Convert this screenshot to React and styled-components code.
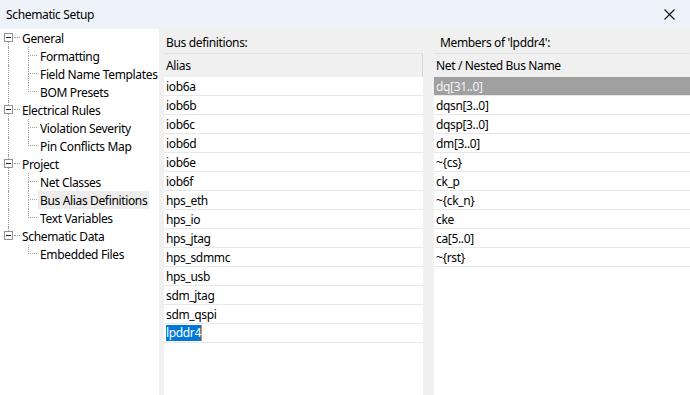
import React from 'react';
import styled, { createGlobalStyle } from 'styled-components';

const GlobalStyle = createGlobalStyle`
  html, body {
    margin: 0;
    padding: 0;
    background: #ffffff;
  }
  body {
    font-family: "Noto Sans", "Liberation Sans", sans-serif;
    font-size: 12px;
    letter-spacing: -0.35px;
    color: #000;
  }
`;

const Window = styled.div`
  width: 690px;
  height: 395px;
  display: flex;
  flex-direction: column;
  overflow: hidden;
`;

const TitleBar = styled.div`
  height: 29px;
  flex: none;
  display: flex;
  align-items: center;
  justify-content: space-between;
  padding: 0 6px 0 6px;
  background: #eef3f9;
`;

const Title = styled.span`
  font-size: 12px;
  color: #000;
`;

const CloseButton = styled.div`
  width: 30px;
  height: 29px;
  display: flex;
  align-items: center;
  justify-content: center;
`;

const Body = styled.div`
  flex: 1;
  display: flex;
  min-height: 0;
`;

/* ---------- tree ---------- */

const TreePanel = styled.div`
  width: 159px;
  flex: none;
  background: #fff;
  display: flex;
  flex-direction: column;
`;

const TreeRow = styled.div`
  height: 18px;
  display: flex;
  align-items: stretch;
`;

const Gutter = styled.div`
  width: 20px;
  flex: none;
  display: flex;
  flex-direction: column;
`;

const LineSeg = styled.div`
  height: ${p => p.$h}px;
  margin-left: 8px;
  border-left: 1px dotted ${p => (p.$on ? '#a0a0a0' : 'transparent')};
`;

const BoxRow = styled.div`
  height: 9px;
  display: flex;
  align-items: center;
  padding-left: 4px;
`;

const Expander = styled.div`
  width: 7px;
  height: 7px;
  border: 1px solid #919191;
  background: #fff;
  display: flex;
  align-items: center;
  justify-content: center;
  flex: none;
`;

const Minus = styled.span`
  width: 5px;
  height: 1px;
  background: #222;
`;

const Dash = styled.span`
  width: 6px;
  margin-left: 1px;
  border-top: 1px dotted #a0a0a0;
`;

const Elbow = styled.div`
  width: 20px;
  flex: none;
  display: flex;
  flex-direction: column;
`;

const ElbowTop = styled.div`
  height: 8px;
  width: 8px;
  margin-left: 8px;
  border-left: 1px dotted #a0a0a0;
  border-bottom: 1px dotted #a0a0a0;
`;

const ElbowBottom = styled.div`
  height: 9px;
  margin-left: 8px;
  border-left: 1px dotted ${p => (p.$last ? 'transparent' : '#a0a0a0')};
`;

const TreeLabel = styled.span`
  display: flex;
  align-items: center;
  padding: 0 2px;
  margin-left: ${p => (p.$child ? '-2px' : '0')};
  white-space: nowrap;
  background: ${p => (p.$selected ? '#ececec' : 'transparent')};
`;

/* ---------- main panel ---------- */

const MainPanel = styled.div`
  flex: 1;
  display: flex;
  background: #f0f0f0;
  padding-left: 5px;
  gap: 11px;
  min-width: 0;
`;

const Section = styled.div`
  width: ${p => p.$w}px;
  flex: none;
  display: flex;
  flex-direction: column;
`;

const SectionLabel = styled.div`
  height: 24px;
  display: flex;
  align-items: center;
  padding-left: ${p => p.$pad}px;
  padding-top: 2px;
  box-sizing: border-box;
`;

const Grid = styled.div`
  flex: 1;
  display: flex;
  flex-direction: column;
  background: #fff;
`;

const GridHeader = styled.div`
  height: 23px;
  display: flex;
  align-items: center;
  padding-left: 2px;
  background: #f0f0f0;
  border-top: 1px solid #e3e3e3;
  border-right: 1px solid ${p => (p.$sep ? '#d5d5d5' : 'transparent')};
`;

const GridRow = styled.div`
  height: 18px;
  display: flex;
  align-items: center;
  padding-left: 2px;
  border-bottom: 1px solid #e8e8e8;
  background: ${p => (p.$selected ? '#a0a0a0' : '#fff')};
  color: ${p => (p.$selected ? '#f4f4f4' : '#000')};
  white-space: nowrap;
`;

const EditText = styled.span`
  background: #0078d7;
  color: #fff;
  border-right: 1px solid #f08a24;
  line-height: 16px;
`;

const treeData = [
  { label: 'General', children: ['Formatting', 'Field Name Templates', 'BOM Presets'] },
  { label: 'Electrical Rules', children: ['Violation Severity', 'Pin Conflicts Map'] },
  { label: 'Project', children: ['Net Classes', 'Bus Alias Definitions', 'Text Variables'] },
  { label: 'Schematic Data', children: ['Embedded Files'] },
];

const aliases = [
  'iob6a', 'iob6b', 'iob6c', 'iob6d', 'iob6e', 'iob6f', 'hps_eth', 'hps_io',
  'hps_jtag', 'hps_sdmmc', 'hps_usb', 'sdm_jtag', 'sdm_qspi',
];

const members = [
  'dq[31..0]', 'dqsn[3..0]', 'dqsp[3..0]', 'dm[3..0]', '~{cs}', 'ck_p',
  '~{ck_n}', 'cke', 'ca[5..0]', '~{rst}',
];

const Tree = () => (
  <TreePanel>
    {treeData.map((group, gi) => {
      const firstGroup = gi === 0;
      const lastGroup = gi === treeData.length - 1;
      return (
        <React.Fragment key={group.label}>
          <TreeRow>
            <Gutter>
              <LineSeg $h={4} $on={!firstGroup} />
              <BoxRow>
                <Expander><Minus /></Expander>
                <Dash />
              </BoxRow>
              <LineSeg $h={5} $on={!lastGroup} />
            </Gutter>
            <TreeLabel>{group.label}</TreeLabel>
          </TreeRow>
          {group.children.map((child, ci) => (
            <TreeRow key={child}>
              <Gutter>
                <LineSeg $h={18} $on={!lastGroup} />
              </Gutter>
              <Elbow>
                <ElbowTop />
                <ElbowBottom $last={ci === group.children.length - 1} />
              </Elbow>
              <TreeLabel $child $selected={child === 'Bus Alias Definitions'}>{child}</TreeLabel>
            </TreeRow>
          ))}
        </React.Fragment>
      );
    })}
  </TreePanel>
);

export default function App() {
  return (
    <>
      <GlobalStyle />
      <Window>
        <TitleBar>
          <Title>Schematic Setup</Title>
          <CloseButton>
            <svg width="11" height="11" viewBox="0 0 11 11">
              <path d="M0.5 0.5 L10.5 10.5 M10.5 0.5 L0.5 10.5" stroke="#111" strokeWidth="1.1" fill="none" />
            </svg>
          </CloseButton>
        </TitleBar>
        <Body>
          <Tree />
          <MainPanel>
            <Section $w={259}>
              <SectionLabel $pad={2}>Bus definitions:</SectionLabel>
              <Grid>
                <GridHeader $sep>Alias</GridHeader>
                {aliases.map(a => (
                  <GridRow key={a}>{a}</GridRow>
                ))}
                <GridRow><EditText>lpddr4</EditText></GridRow>
              </Grid>
            </Section>
            <Section $w={256}>
              <SectionLabel $pad={6}>Members of 'lpddr4':</SectionLabel>
              <Grid>
                <GridHeader>Net / Nested Bus Name</GridHeader>
                {members.map((m, i) => (
                  <GridRow key={m} $selected={i === 0}>{m}</GridRow>
                ))}
              </Grid>
            </Section>
          </MainPanel>
        </Body>
      </Window>
    </>
  );
}
